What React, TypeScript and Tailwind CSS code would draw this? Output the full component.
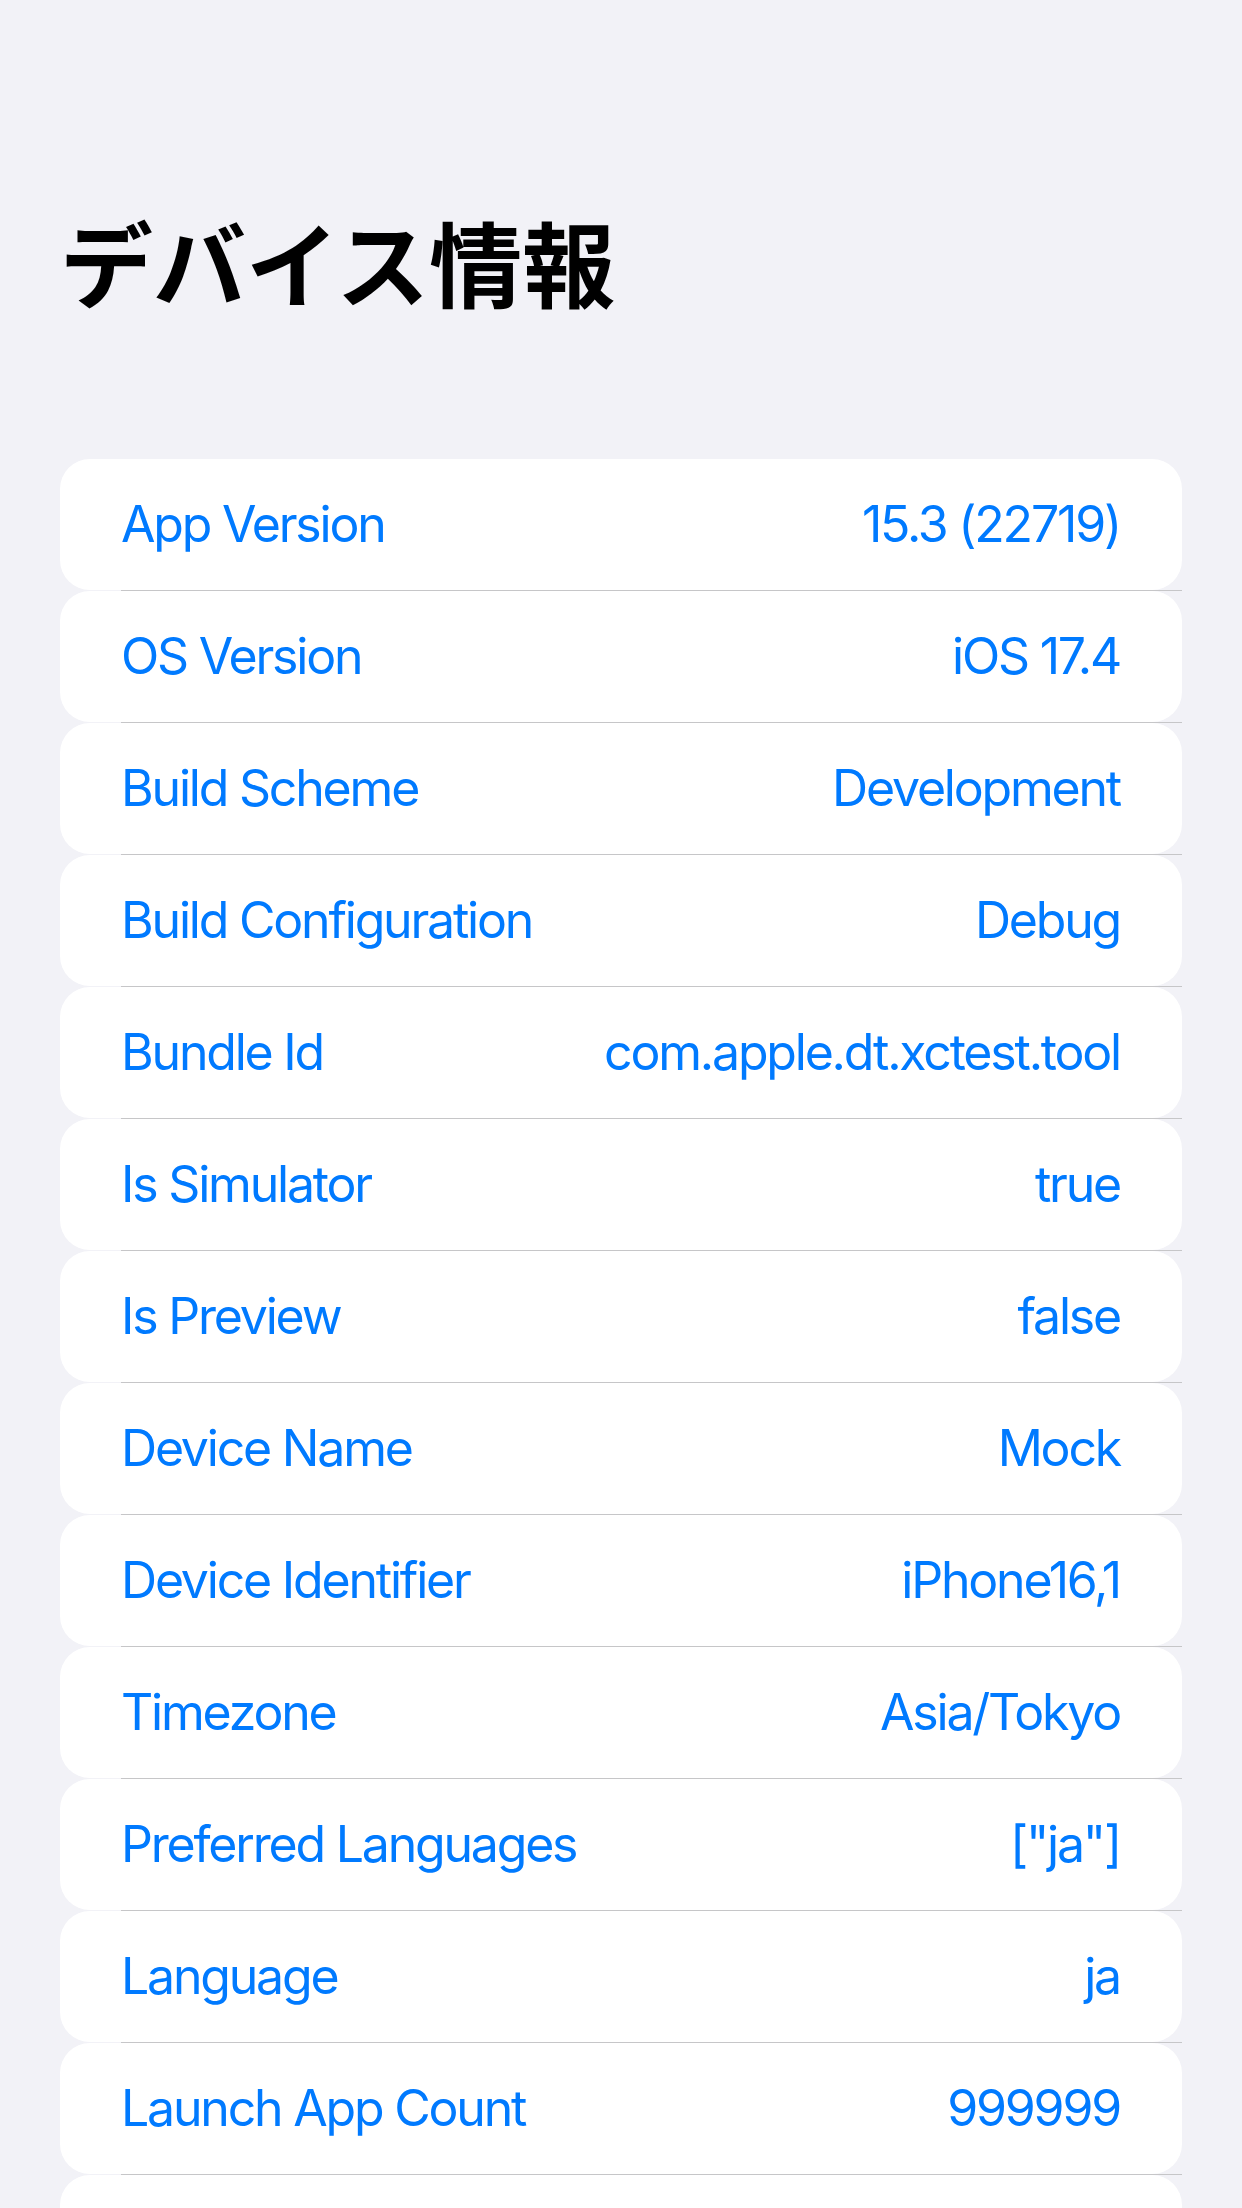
import React from "react";

const rows: [string, string][] = [
  ["App Version", "15.3 (22719)"],
  ["OS Version", "iOS 17.4"],
  ["Build Scheme", "Development"],
  ["Build Configuration", "Debug"],
  ["Bundle Id", "com.apple.dt.xctest.tool"],
  ["Is Simulator", "true"],
  ["Is Preview", "false"],
  ["Device Name", "Mock"],
  ["Device Identifier", "iPhone16,1"],
  ["Timezone", "Asia/Tokyo"],
  ["Preferred Languages", '["ja"]'],
  ["Language", "ja"],
  ["Launch App Count", "999999"],
  ["", ""],
];

export default function App() {
  return (
    <div className="min-h-[2208px] bg-[#f2f2f7] px-[60px] [font-family:Inter,'Noto_Sans_CJK_JP',sans-serif]">
      <h1 className="pt-[203px] text-[93px] leading-[116px] font-bold text-black [font-family:'Noto_Sans_CJK_JP',sans-serif]">
        デバイス情報
      </h1>
      <div className="mt-[140px] flex flex-col">
        {rows.map(([k, v], i) => (
          <div key={i} className="flex flex-col">
            <div className="flex h-[131px] items-center justify-between rounded-[30px] bg-white pl-[61px] pr-[62px] text-[50px] tracking-[-2.2px] text-[#007aff]">
              <span>{k}</span>
              <span>{v}</span>
            </div>
            <div className="ml-[61px] h-px bg-[#c6c6c8]" />
          </div>
        ))}
      </div>
    </div>
  );
}
